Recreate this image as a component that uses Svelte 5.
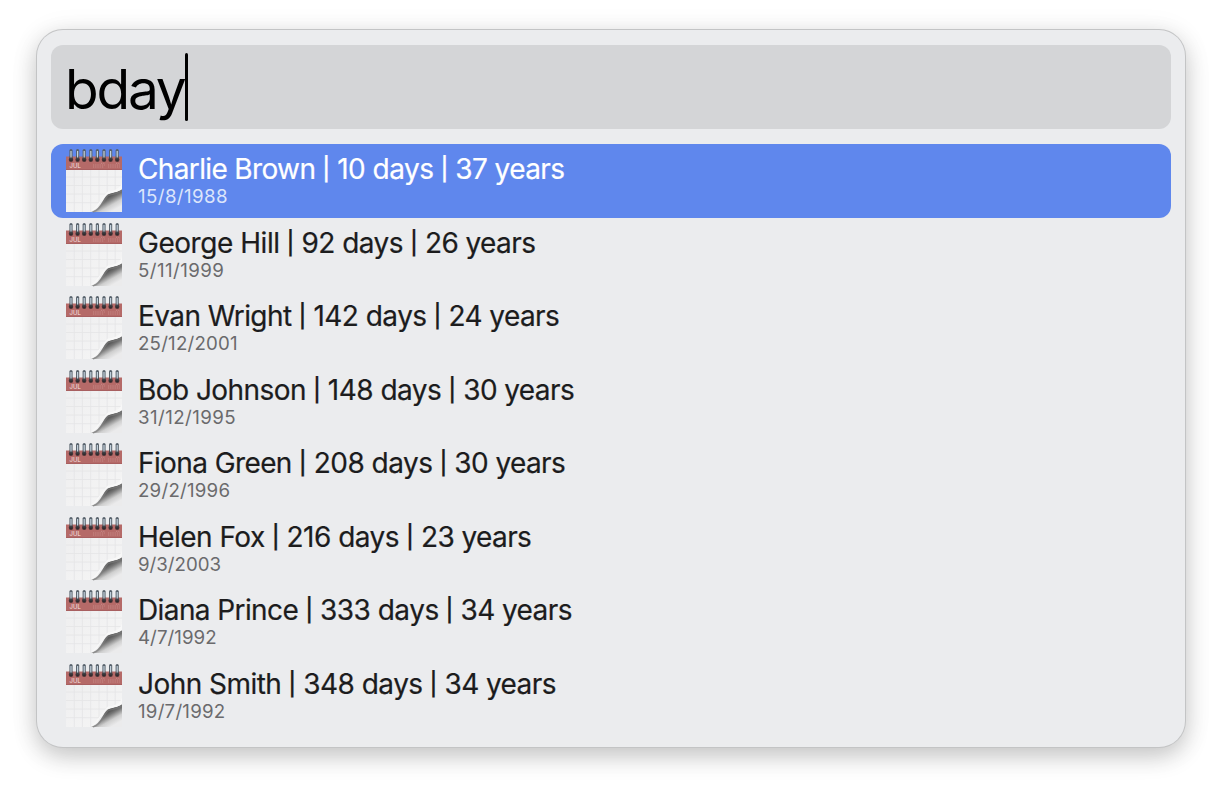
<script>
  const query = 'bday';
  const results = [
    { name: 'Charlie Brown', days: '10 days', years: '37 years', date: '15/8/1988', track: -0.64, sub: 0.4 },
    { name: 'George Hill', days: '92 days', years: '26 years', date: '5/11/1999', track: -0.46, sub: 0.42 },
    { name: 'Evan Wright', days: '142 days', years: '24 years', date: '25/12/2001', track: -0.58, sub: 0.2 },
    { name: 'Bob Johnson', days: '148 days', years: '30 years', date: '31/12/1995', track: -0.56, sub: 0.42 },
    { name: 'Fiona Green', days: '208 days', years: '30 years', date: '29/2/1996', track: -0.6, sub: 0.22 },
    { name: 'Helen Fox', days: '216 days', years: '23 years', date: '9/3/2003', track: -0.54, sub: 0 },
    { name: 'Diana Prince', days: '333 days', years: '34 years', date: '4/7/1992', track: -0.6, sub: 0.05 },
    { name: 'John Smith', days: '348 days', years: '34 years', date: '19/7/1992', track: -0.54, sub: 0.22 }
  ];
  const rings = [5, 11.6, 18.2, 24.8, 31.4, 38, 44.6, 51.2];
  const columns = [8.3, 16.4, 24.7, 33, 41.2, 49.2];
  const lines = [28, 36.5, 45, 53.7];
</script>

<svg class="defs" width="0" height="0" aria-hidden="true">
  <defs>
    <linearGradient id="page" x1="0" y1="0" x2="1" y2="1">
      <stop offset="0" stop-color="#eeeeef" />
      <stop offset="1" stop-color="#f6f6f6" />
    </linearGradient>
    <linearGradient id="shade" x1="42" y1="46" x2="50" y2="60" gradientUnits="userSpaceOnUse">
      <stop offset="0" stop-color="#444" />
      <stop offset="0.3" stop-color="#777" />
      <stop offset="0.65" stop-color="#cfcfcf" />
      <stop offset="1" stop-color="#ebebec" />
    </linearGradient>
    <linearGradient id="ring" x1="0" y1="0" x2="0" y2="1">
      <stop offset="0" stop-color="#56606a" />
      <stop offset="0.5" stop-color="#5c6770" />
      <stop offset="1" stop-color="#2b2527" />
    </linearGradient>
    <symbol id="calendar" viewBox="0 0 56 64">
      <rect y="20" width="56" height="43" fill="url(#page)" />
      <g stroke="#e5e5e6" stroke-width="0.8">
        {#each columns as x}<path d="M{x} 21V63" />{/each}
        {#each lines as y}<path d="M0 {y}H56" />{/each}
      </g>
      <path d="M56 40C52 43.5 47 43.5 42 45.5C36 50 36 60 25 63H56Z" fill="url(#shade)" />
      <path d="M56 41.5C52 44.5 47 44.5 42 46.5C37 50.5 36 60 27 63" fill="none" stroke="#808080" stroke-width="1.8" opacity="0.6" />
      <path d="M56 34C54 39.5 48 42 42 42.5C36 48 32 57 24 63C34 59 34.5 50 41 45.3C46 43 51 43.5 56 40.3Z" fill="#f8f8f8" />
      <rect y="7.5" width="56" height="13.5" fill="#b56a68" />
      <path d="M0 20.5H56" stroke="#a85f60" />
      <text x="3.6" y="19.4" font-size="6" fill="#f5e2e2" font-family="Inter, sans-serif">JUL</text>
      <g stroke="#cf9896" stroke-width="0.7" stroke-dasharray="1 0.8">
        <path d="M27 16H39M27 18H38M42 16H54M42 18H54M35 14.3H39M50 14.3H54" />
      </g>
      {#each rings as x}
        <circle cx={x} cy="10.8" r="2.2" fill="#4a3538" />
        <rect x={x - 1.6} y="0" width="3.2" height="12" rx="1.6" fill="url(#ring)" />
        <path d="M{x} 2V8.5" stroke="#c3d1dc" stroke-width="1.2" />
      {/each}
    </symbol>
  </defs>
</svg>

<main class="panel">
  <div class="search"><span class="query">{query}</span><span class="caret"></span></div>
  <ul class="results">
    {#each results as item, i}
      <li class="row" class:selected={i === 0}>
        <svg class="icon" width="56" height="64"><use href="#calendar" /></svg>
        <div class="copy">
          <div class="title">
            <span style="letter-spacing: {item.track}px">{item.name}</span>
            <span class="bar">|</span>
            <span class="days">{item.days}</span>
            <span class="bar">|</span>
            <span class="years">{item.years}</span>
          </div>
          <span class="date" style="letter-spacing: {item.sub}px">{item.date}</span>
        </div>
      </li>
    {/each}
  </ul>
</main>

<style>
  :global(body) {
    margin: 0;
    background: #fff;
  }
  :global(#app) {
    height: 790px;
    overflow: hidden;
  }
  .defs {
    display: block;
  }
  .panel {
    box-sizing: border-box;
    width: 1148px;
    height: 717px;
    margin: 30px 0 0 37px;
    padding: 14.5px 14.5px 0 14px;
    border-radius: 26px;
    background: #ebecee;
    box-shadow: 0 0 0 1px #c3c4c5, 0 9px 24px rgba(0, 0, 0, 0.2), 0 3px 30px rgba(0, 0, 0, 0.08);
    font-family: Inter, sans-serif;
  }
  .search {
    display: flex;
    box-sizing: border-box;
    height: 84.5px;
    padding: 8.5px 14px 8px;
    border-radius: 12px;
    background: #d4d5d7;
  }
  .query {
    font-size: 55px;
    font-weight: 380;
    line-height: 72px;
    letter-spacing: -2.2px;
    color: #000;
  }
  .caret {
    width: 3.5px;
    height: 68px;
    border-radius: 1.5px;
    background: #000;
  }
  .results {
    margin: 15px 0 0;
    padding: 0;
    list-style: none;
  }
  .row {
    display: flex;
    box-sizing: border-box;
    height: 73.57px;
    padding: 5px 15px 0;
    gap: 16px;
    border-radius: 12px;
    color: #1c1c1d;
  }
  .icon {
    flex: none;
  }
  .copy {
    display: flex;
    flex-direction: column;
    padding-top: 3px;
  }
  .title {
    display: flex;
    font-size: 28px;
    font-weight: 430;
    line-height: 34px;
    white-space: pre;
    -webkit-text-stroke: 0.2px currentColor;
  }
  .bar {
    width: 21.9px;
    font-size: 23px;
    font-weight: 550;
    text-align: center;
  }
  .days {
    letter-spacing: -0.52px;
  }
  .years {
    letter-spacing: -0.6px;
  }
  .date {
    font-size: 18.7px;
    line-height: 22px;
    color: #6a6a6c;
  }
  .selected {
    background: #5f87ed;
    color: #fff;
  }
  .selected .date {
    color: #dce5fb;
  }
</style>
